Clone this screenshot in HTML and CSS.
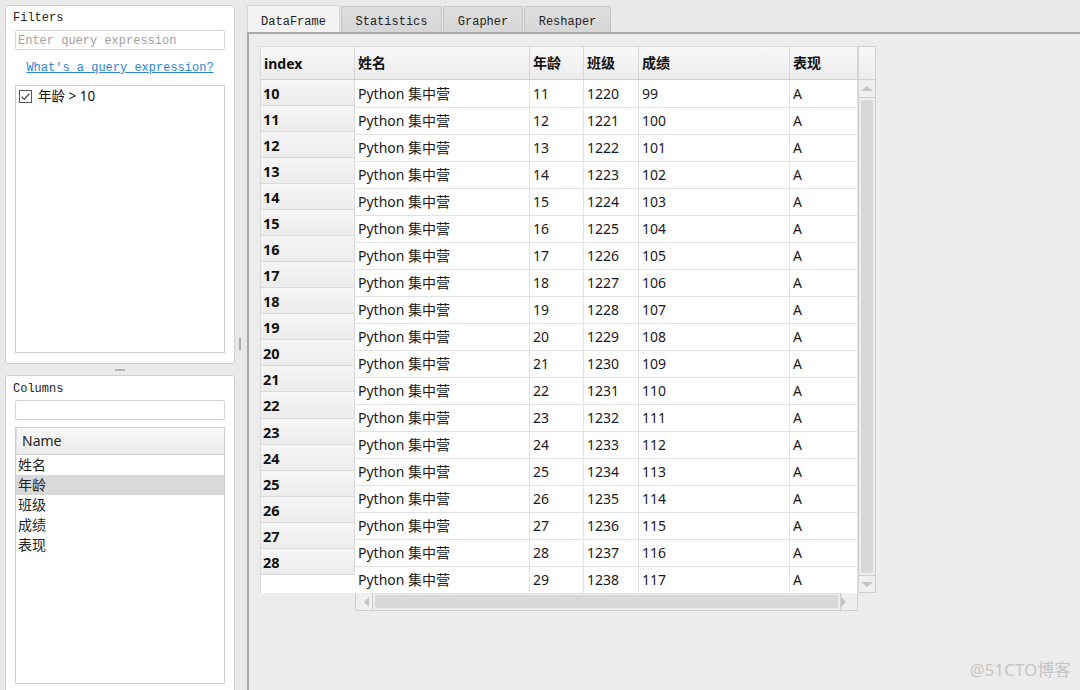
FILE: index.html
```html
<!DOCTYPE html>
<html lang="zh">
<head>
<meta charset="utf-8">
<title>PandasGUI</title>
<link rel="stylesheet" href="styles.css">
</head>
<body>
<div class="app">
  <aside class="left">
    <section class="panel filters">
      <div class="plabel">Filters</div>
      <input class="field" placeholder="Enter query expression">
      <div class="linkrow"><a class="qlink">What's a query expression?</a></div>
      <div class="listbox">
        <div class="chkitem">
          <span class="chk"><svg width="13" height="13" viewBox="0 0 13 13"><rect x="0.5" y="0.5" width="12" height="12" fill="#fff" stroke="#555"/><path d="M2.6 6.6 L5.2 9.2 L10.4 3.6" fill="none" stroke="#333" stroke-width="1.2"/></svg></span>
          <span>年龄 &gt; 10</span>
        </div>
      </div>
    </section>
    <div class="hsplit"><span class="hhandle"></span></div>
    <section class="panel columns">
      <div class="plabel">Columns</div>
      <input class="field">
      <div class="collist">
        <div class="colhead">Name</div>
        <div class="colrow">姓名</div>
        <div class="colrow sel">年龄</div>
        <div class="colrow">班级</div>
        <div class="colrow">成绩</div>
        <div class="colrow">表现</div>
      </div>
    </section>
  </aside>
  <div class="vsplit"><span class="vhandle"></span></div>
  <main class="right">
    <nav class="tabs">
      <div class="tab active t1">DataFrame</div>
      <div class="tab t2">Statistics</div>
      <div class="tab t3">Grapher</div>
      <div class="tab t4">Reshaper</div>
    </nav>
    <div class="frame">
      <div class="tbl">
        <div class="idxcol">
          <div class="hcell idxh">index</div>
          <div class="icell">10</div>
          <div class="icell">11</div>
          <div class="icell">12</div>
          <div class="icell">13</div>
          <div class="icell">14</div>
          <div class="icell">15</div>
          <div class="icell">16</div>
          <div class="icell">17</div>
          <div class="icell">18</div>
          <div class="icell">19</div>
          <div class="icell">20</div>
          <div class="icell">21</div>
          <div class="icell">22</div>
          <div class="icell">23</div>
          <div class="icell">24</div>
          <div class="icell">25</div>
          <div class="icell">26</div>
          <div class="icell">27</div>
          <div class="icell">28</div>
          <div class="ifill"></div>
        </div>
        <div class="datawrap">
          <div class="drow head">
            <div class="hcell">姓名</div><div class="hcell">年龄</div><div class="hcell">班级</div><div class="hcell">成绩</div><div class="hcell">表现</div>
          </div>
          <div class="drow"><div>Python 集中营</div><div>11</div><div>1220</div><div>99</div><div>A</div></div>
          <div class="drow"><div>Python 集中营</div><div>12</div><div>1221</div><div>100</div><div>A</div></div>
          <div class="drow"><div>Python 集中营</div><div>13</div><div>1222</div><div>101</div><div>A</div></div>
          <div class="drow"><div>Python 集中营</div><div>14</div><div>1223</div><div>102</div><div>A</div></div>
          <div class="drow"><div>Python 集中营</div><div>15</div><div>1224</div><div>103</div><div>A</div></div>
          <div class="drow"><div>Python 集中营</div><div>16</div><div>1225</div><div>104</div><div>A</div></div>
          <div class="drow"><div>Python 集中营</div><div>17</div><div>1226</div><div>105</div><div>A</div></div>
          <div class="drow"><div>Python 集中营</div><div>18</div><div>1227</div><div>106</div><div>A</div></div>
          <div class="drow"><div>Python 集中营</div><div>19</div><div>1228</div><div>107</div><div>A</div></div>
          <div class="drow"><div>Python 集中营</div><div>20</div><div>1229</div><div>108</div><div>A</div></div>
          <div class="drow"><div>Python 集中营</div><div>21</div><div>1230</div><div>109</div><div>A</div></div>
          <div class="drow"><div>Python 集中营</div><div>22</div><div>1231</div><div>110</div><div>A</div></div>
          <div class="drow"><div>Python 集中营</div><div>23</div><div>1232</div><div>111</div><div>A</div></div>
          <div class="drow"><div>Python 集中营</div><div>24</div><div>1233</div><div>112</div><div>A</div></div>
          <div class="drow"><div>Python 集中营</div><div>25</div><div>1234</div><div>113</div><div>A</div></div>
          <div class="drow"><div>Python 集中营</div><div>26</div><div>1235</div><div>114</div><div>A</div></div>
          <div class="drow"><div>Python 集中营</div><div>27</div><div>1236</div><div>115</div><div>A</div></div>
          <div class="drow"><div>Python 集中营</div><div>28</div><div>1237</div><div>116</div><div>A</div></div>
          <div class="drow"><div>Python 集中营</div><div>29</div><div>1238</div><div>117</div><div>A</div></div>
          <div class="hscroll">
            <div class="sbtn"><span class="arr left"></span></div>
            <div class="htrack"><div class="hthumb"></div></div>
            <div class="sbtn rb"><span class="arr right"></span></div>
          </div>
        </div>
        <div class="vscroll">
          <div class="vhead"></div>
          <div class="vbody">
            <div class="sbtn vb"><span class="arr up"></span></div>
            <div class="vtrack"><div class="vthumb"></div></div>
            <div class="sbtn vb bot"><span class="arr down"></span></div>
          </div>
        </div>
      </div>
    </div>
  </main>
  <div class="watermark">@51CTO博客</div>
</div>
</body>
</html>
```

FILE: styles.css
```css
* { box-sizing: border-box; }
html, body { margin: 0; padding: 0; }
body {
  width: 1080px;
  height: 690px;
  overflow: hidden;
  background: #e9e9e9;
  font-family: "Noto Sans", "Noto Sans CJK SC", sans-serif;
  font-size: 14px;
  color: #111;
}
.app {
  position: relative;
  display: flex;
  height: 690px;
  padding-top: 5px;
}
.left {
  width: 230px;
  margin-left: 5px;
  display: flex;
  flex-direction: column;
  flex: none;
}
.panel {
  background: #fff;
  border: 1px solid #cfcfcf;
  border-radius: 3px;
  padding: 0 9px 0 9px;
  display: flex;
  flex-direction: column;
  flex: none;
}
.filters { height: 359px; padding-top: 4px; }
.columns { height: 320px; padding-top: 5px; }
.plabel {
  font-family: "Liberation Mono", monospace;
  font-size: 12px;
  line-height: 16px;
  height: 16px;
  margin-left: -2px;
  color: #222;
}
.field {
  display: block;
  width: 210px;
  height: 20px;
  margin: 4px 0 0 0;
  padding: 1px 0 0 2px;
  border: 1px solid #d4d4d4;
  border-radius: 2px;
  background: #fff;
  font-family: "Liberation Mono", monospace;
  font-size: 12px;
  outline: none;
}
.columns .field { margin-top: 3px; }
.field::placeholder { color: #a2a2a2; }
.linkrow {
  margin-top: 8px;
  height: 16px;
  line-height: 16px;
  text-align: center;
  width: 210px;
}
.qlink {
  font-family: "Liberation Mono", monospace;
  font-size: 12px;
  color: #2a86d6;
  text-decoration: underline;
}
.listbox {
  margin-top: 11px;
  width: 210px;
  height: 268px;
  border: 1px solid #cfcfcf;
}
.chkitem {
  display: flex;
  align-items: center;
  gap: 6px;
  padding: 2px 0 0 3px;
  height: 16px;
  line-height: 14px;
  font-size: 13.5px;
  box-sizing: content-box;
}
.chk { display: flex; width: 13px; height: 13px; }
.hsplit {
  height: 11px;
  display: flex;
  align-items: center;
  justify-content: center;
  flex: none;
}
.hhandle { width: 10px; height: 2px; background: #b4b4b4; }
.collist {
  margin-top: 7px;
  width: 210px;
  height: 257px;
  border: 1px solid #cfcfcf;
}
.colhead {
  height: 27px;
  line-height: 26px;
  padding-left: 5px;
  background: linear-gradient(#f8f8f8, #ececec);
  border-bottom: 1px solid #d2d2d2;
  border-left: 1px solid #e0e0e0;
  font-size: 14px;
  color: #222;
}
.colrow {
  height: 20px;
  line-height: 20px;
  padding-left: 2px;
  font-size: 14px;
  color: #222;
}
.colrow.sel { background: #d9d9d9; }
.vsplit {
  width: 12px;
  flex: none;
  display: flex;
  align-items: center;
  padding-left: 4px;
  padding-bottom: 7px;
}
.vhandle { width: 2px; height: 12px; background: #a9a9a9; }
.right {
  flex: 1;
  display: flex;
  flex-direction: column;
  min-width: 0;
}
.tabs {
  height: 27px;
  display: flex;
  align-items: flex-end;
  gap: 1px;
  flex: none;
}
.tab {
  height: 26px;
  line-height: 24px;
  padding-top: 3px;
  text-align: center;
  font-family: "Liberation Mono", monospace;
  font-size: 12px;
  color: #222;
  background: linear-gradient(#dedede, #d6d6d6);
  border: 1px solid #c4c4c4;
  border-bottom: none;
  border-radius: 2px 2px 0 0;
}
.tab.active {
  height: 27px;
  line-height: 24px;
  padding-top: 4px;
  background: #f3f3f3;
  border-color: #d6d6d6;
}
.t1 { width: 93px; }
.t2 { width: 101px; }
.t3 { width: 80px; }
.t4 { width: 87px; }
.frame {
  flex: 1;
  border-top: 2px solid #a8a8a8;
  border-left: 2px solid #a8a8a8;
  background: #ececec;
  padding: 12px 0 0 11px;
}
.tbl {
  display: flex;
  align-items: flex-start;
}
.hcell {
  height: 34px;
  line-height: 31px;
  padding-left: 3px;
  font-weight: bold;
  font-size: 14px;
  background: linear-gradient(#f8f8f8, #ececec);
  border-right: 1px solid #d6d6d6;
  border-bottom: 1px solid #d0d0d0;
  border-top: 1px solid #dadada;
  color: #111;
}
.hcell.idxh { line-height: 33px; }
.idxcol {
  width: 95px;
  flex: none;
  display: flex;
  flex-direction: column;
  border-left: 1px solid #dadada;
}
.icell {
  height: 26px;
  line-height: 25px;
  padding: 1px 0 0 2px;
  font-weight: bold;
  font-size: 14.5px;
  background: linear-gradient(#f6f6f6, #ececec);
  border-bottom: 1px solid #dadada;
  border-right: 1px solid #dadada;
  flex: none;
}
.icell:nth-child(n+10) { height: 26.12px; }
.ifill { flex: none; height: 18px; background: #fff; }
.datawrap {
  width: 503px;
  flex: none;
}
.drow {
  display: grid;
  grid-template-columns: 175px 54px 55px 151px 68px;
  height: 27px;
  background: #fff;
}
.drow > div {
  border-right: 1px solid #e2e2e2;
  border-bottom: 1px solid #e2e2e2;
  padding: 1px 0 0 3px;
  line-height: 26px;
  white-space: nowrap;
  color: #1a1a1a;
}
.drow.head { height: 34px; }
.drow.head > .hcell {
  border-right: 1px solid #d6d6d6;
  border-bottom: 1px solid #d0d0d0;
  padding-top: 0;
  line-height: 31px;
  color: #111;
}
.hscroll {
  display: flex;
  height: 18px;
  background: #ececec;
  border: 1px solid #cdcdcd;
  border-top: none;
}
.sbtn {
  width: 17px;
  height: 17px;
  display: flex;
  align-items: center;
  justify-content: center;
  border-right: 1px solid #cdcdcd;
  background: #efefef;
  flex: none;
}
.sbtn.rb { border-right: none; border-left: 1px solid #cdcdcd; }
.htrack {
  flex: 1;
  padding: 2px 2px;
}
.hthumb {
  height: 13px;
  background: #d8d8d8;
  border-radius: 2px;
}
.arr { width: 0; height: 0; border: solid transparent; }
.arr.left { border-width: 5px 5px 5px 0; border-right-color: #c4c4c4; }
.arr.right { border-width: 5px 0 5px 5px; border-left-color: #c4c4c4; }
.arr.up { border-width: 0 6px 5px 6px; border-bottom-color: #c4c4c4; }
.arr.down { border-width: 5px 6px 0 6px; border-top-color: #c4c4c4; }
.vscroll {
  width: 18px;
  flex: none;
}
.vhead {
  height: 34px;
  background: linear-gradient(#f8f8f8, #ececec);
  border: 1px solid #d0d0d0;
  border-left: 1px solid #d6d6d6;
}
.vbody {
  height: 513px;
  display: flex;
  flex-direction: column;
  border: 1px solid #cdcdcd;
  border-top: none;
  background: #ececec;
}
.sbtn.vb {
  width: 16px;
  height: 18px;
  border-right: none;
  border-bottom: 1px solid #cdcdcd;
}
.sbtn.vb.bot { border-bottom: none; border-top: 1px solid #cdcdcd; height: 17px; }
.vtrack { flex: 1; padding: 2px 2px; }
.vthumb { height: 100%; background: #d8d8d8; border-radius: 2px; }
.watermark {
  position: absolute;
  right: 9px;
  bottom: 9px;
  font-size: 16.5px;
  color: #c4c4c4;
  letter-spacing: 0.3px;
}
```
